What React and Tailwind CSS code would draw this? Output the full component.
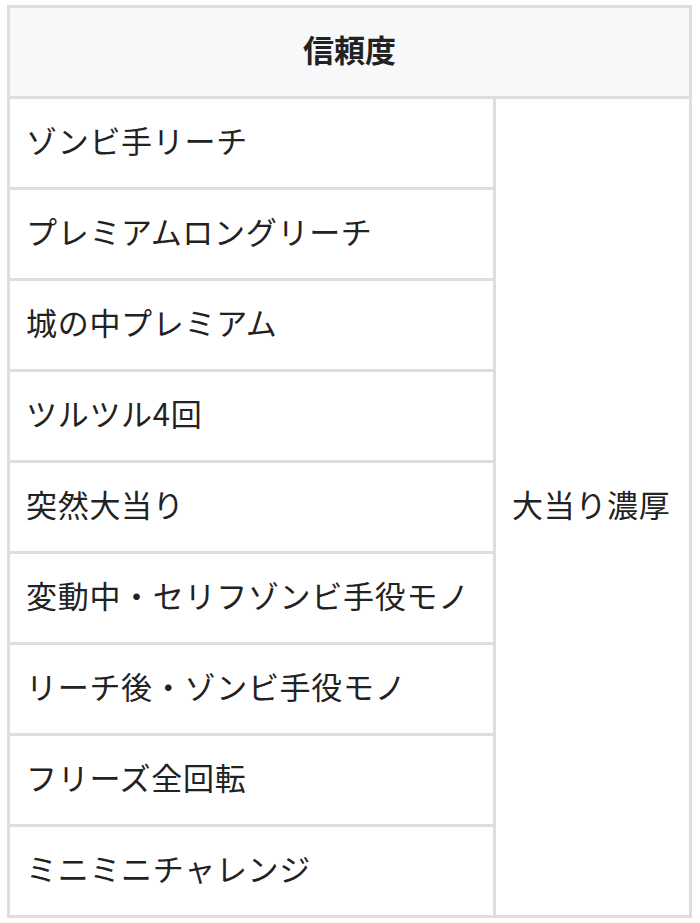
import React from 'react';

const rows = [
  'ゾンビ手リーチ',
  'プレミアムロングリーチ',
  '城の中プレミアム',
  'ツルツル4回',
  '突然大当り',
  '変動中・セリフゾンビ手役モノ',
  'リーチ後・ゾンビ手役モノ',
  'フリーズ全回転',
  'ミニミニチャレンジ',
];

export default function App() {
  return (
    <div
      className="w-[700px] h-[923px] bg-white pt-[5px] pl-[7px] text-[#222]"
      style={{ fontFamily: '"Noto Sans CJK JP", "Noto Sans", sans-serif' }}
    >
      <div className="w-[685px] border-[3px] border-[#dedede] flex flex-col">
        <div className="h-[91px] pb-[6px] bg-[#f7f8fa] border-b-[3px] border-[#dedede] flex items-center justify-center text-[31px] font-bold">
          信頼度
        </div>
        <div className="flex">
          <div className="w-[486px] border-r-[3px] border-[#dedede] flex flex-col">
            {rows.map((r, i) => (
              <div
                key={r}
                className={
                  'flex items-center pl-[16px] pb-[6px] text-[31px] tracking-[0.7px] ' +
                  (i < rows.length - 1 ? 'h-[91px] border-b-[3px] border-[#dedede]' : 'h-[88px]')
                }
              >
                {r}
              </div>
            ))}
          </div>
          <div className="flex-1 flex items-center pl-[16px] pb-[6px] text-[31px] tracking-[0.7px]">
            大当り濃厚
          </div>
        </div>
      </div>
    </div>
  );
}
